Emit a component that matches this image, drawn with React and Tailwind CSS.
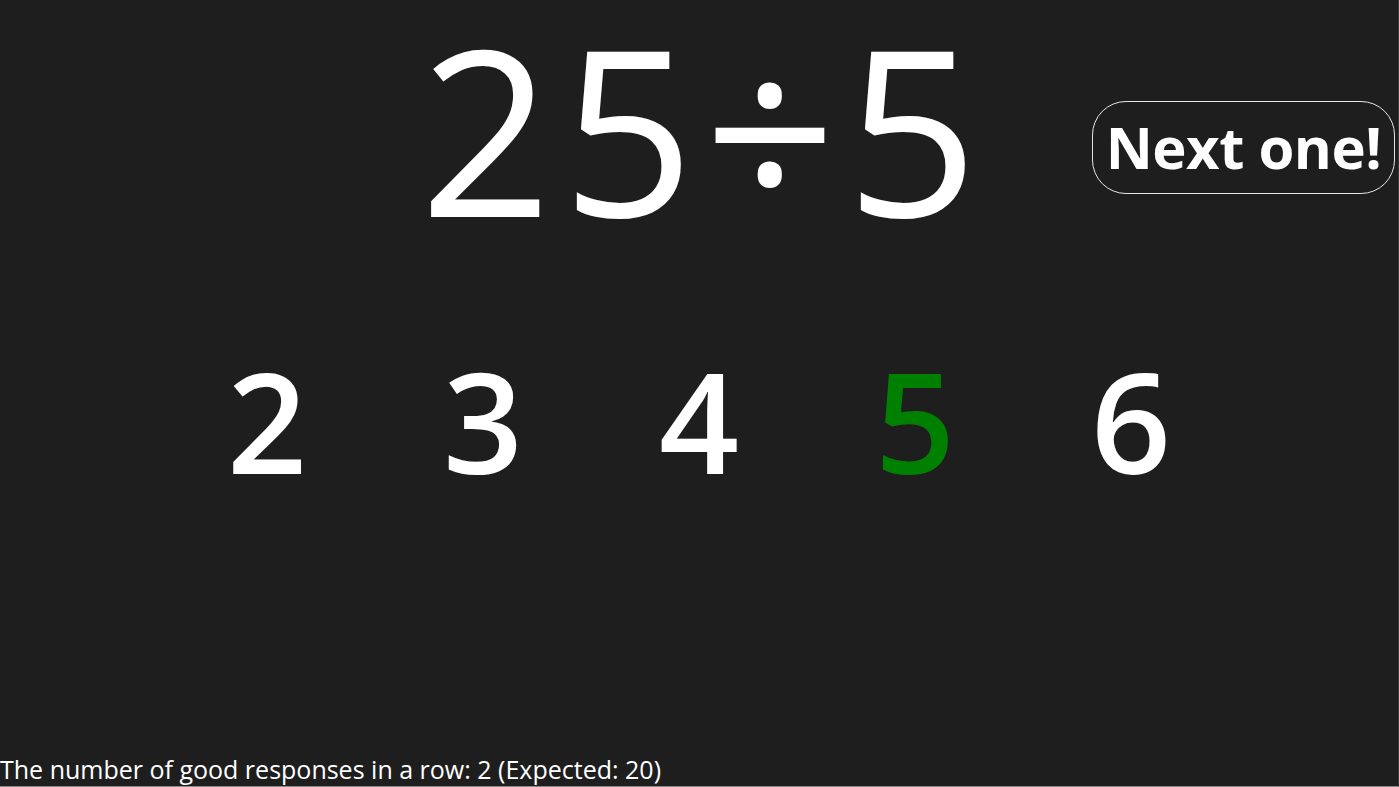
const choices = [2, 3, 4, 5, 6];

export default function App() {
  const answer = 5;

  return (
    <div
      className="flex h-screen w-full flex-col overflow-hidden border-r border-b border-r-[#3a3a3a] border-b-[#8a8a8a] bg-[#1e1e1e] text-white"
      style={{ fontFamily: '"Open Sans", "Noto Sans", sans-serif' }}
    >
      <div className="grid h-[276px] grid-cols-[1fr_auto_1fr] items-center">
        <div />
        <div className="pl-[10px] pb-[20px] text-[231px] leading-[256px] font-normal tracking-[10px] whitespace-nowrap">
          25÷5
        </div>
        <div className="flex justify-end pt-[18px] pr-[3px]">
          <button
            type="button"
            className="h-[93px] w-[303px] rounded-[34px] border-[1.5px] border-[#e6e6e6] text-[58px] leading-none font-bold tracking-[-0.5px]"
          >
            Next one!
          </button>
        </div>
      </div>

      <div className="mt-[64px] flex justify-center">
        {choices.map((value) => (
          <div
            key={value}
            className={`w-[216px] text-center text-[140px] leading-[160px] font-semibold ${value === answer ? "text-[#008000]" : "text-white"}`}
          >
            {value}
          </div>
        ))}
      </div>

      <div className="mt-auto text-[25px] leading-[34px]">
        The number of good responses in a row: 2 (Expected: 20)
      </div>
    </div>
  );
}
